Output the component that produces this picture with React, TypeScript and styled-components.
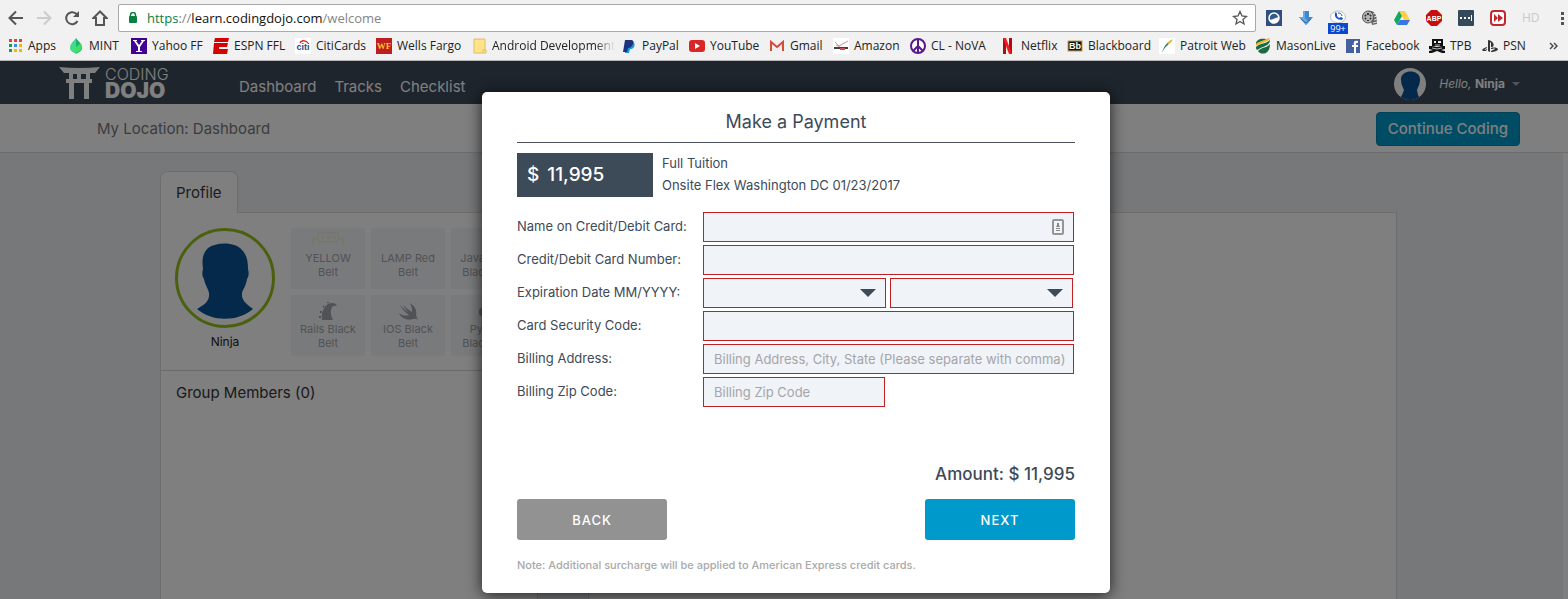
import React from "react";
import styled, { createGlobalStyle } from "styled-components";

const slate = "#3d4a58";
const blue = "#0099cb";
const pageFont = `Inter, "Liberation Sans", sans-serif`;
const chromeFont = `"Open Sans", "Noto Sans", sans-serif`;

const GlobalStyle = createGlobalStyle`
  *, *::before, *::after { box-sizing: border-box; }
  html, body, #root { height: 100%; }
  body { margin: 0; overflow: hidden; background: #fff; font-family: ${pageFont}; }
  button, input, select { font-family: inherit; margin: 0; }
  svg { display: block; flex: none; }
`;

const Shell = styled.div`
  display: flex;
  flex-direction: column;
  height: 100%;
`;

/* ---------- Browser frame ---------- */

const BrowserFrame = styled.div`
  flex: none;
  background: #f1f1f1;
  border-bottom: 1px solid #b6b4b6;
  font-family: ${chromeFont};
  padding: 4px 0 0;
`;

const Toolbar = styled.div`
  display: flex;
  align-items: center;
  height: 28px;
  padding: 0 0 0 8px;
`;

const NavButtons = styled.div`
  display: flex;
  gap: 12px;
  margin-right: 10px;
`;

const IconButton = styled.button<{ $width?: number }>`
  display: grid;
  place-items: center;
  width: ${(p) => p.$width ?? 16}px;
  height: 24px;
  padding: 0;
  border: 0;
  background: none;
  position: relative;
`;

const Omnibox = styled.div`
  flex: 1;
  min-width: 0;
  display: flex;
  align-items: center;
  height: 28px;
  padding: 0 7px 0 9px;
  border: 1px solid #a9a9a9;
  border-radius: 2px;
  background: #fff;
`;

const Address = styled.div`
  flex: 1;
  min-width: 0;
  margin-left: 9px;
  font-size: 13px;
  line-height: 20px;
  white-space: nowrap;
  overflow: hidden;
  color: #858585;
  outline: none;
`;

const Scheme = styled.span`
  color: #0b8043;
`;

const Host = styled.span`
  color: #111;
`;

const Extensions = styled.div`
  display: flex;
  gap: 16px;
  margin-left: 10px;
`;

const CountBadge = styled.span`
  position: absolute;
  left: -2px;
  top: 17px;
  width: 20px;
  height: 11px;
  background: #0a48cf;
  color: #fff;
  font-size: 9px;
  line-height: 11px;
  text-align: center;
`;

const HdLabel = styled.span`
  color: #c9c9c9;
  font-size: 12px;
  line-height: 16px;
`;

const BookmarkBar = styled.nav`
  display: flex;
  align-items: center;
  height: 28px;
  padding: 0 10px 0 7px;
`;

const Bookmark = styled.a<{ $width: number; $fade?: boolean }>`
  flex: 0 0 ${(p) => p.$width}px;
  display: flex;
  align-items: center;
  gap: 5px;
  font-size: 12px;
  line-height: 16px;
  color: #222;
  text-decoration: none;
  white-space: nowrap;

  span {
    ${(p) =>
      p.$fade &&
      `-webkit-mask-image: linear-gradient(90deg, #000 84%, transparent);
       mask-image: linear-gradient(90deg, #000 84%, transparent);`}
  }
`;

const MoreButton = styled.button`
  margin-left: auto;
  padding: 0;
  border: 0;
  background: none;
  color: #444;
`;

/* ---------- Site ---------- */

const Site = styled.div`
  flex: 1;
  min-height: 0;
  position: relative;
  overflow: hidden;
  display: flex;
  flex-direction: column;
`;

const SiteHeader = styled.header`
  flex: none;
  display: flex;
  align-items: center;
  height: 43px;
  padding: 0 48px 0 59px;
  background: ${slate};
  color: #fff;
`;

const Logo = styled.a`
  display: flex;
  align-items: center;
  gap: 5px;
  color: #fff;
  text-decoration: none;
`;

const LogoWords = styled.span`
  display: flex;
  flex-direction: column;
  width: 64px;
  font-size: 16px;
  line-height: 16px;
  font-weight: 300;

  b {
    font-size: 21px;
    line-height: 18px;
    font-weight: 900;
  }
`;

const SiteNav = styled.nav`
  display: flex;
  gap: 18px;
  margin-left: 70px;
  padding-top: 9px;

  a {
    color: #fff;
    font-size: 15px;
    line-height: 20px;
    text-decoration: none;
  }
`;

const UserMenu = styled.button`
  margin-left: auto;
  display: flex;
  align-items: center;
  padding: 2px 0 0;
  border: 0;
  background: none;
  color: #fff;
  font-size: 12px;
  line-height: 16px;
`;

const HeadThumb = styled.span`
  width: 32px;
  height: 32px;
  margin-right: 13px;
  border-radius: 50%;
  overflow: hidden;
  background: #fff;
`;

const Caret = styled.span`
  margin-left: 7px;
  border: 4px solid transparent;
  border-bottom: 0;
  border-top-color: #a3a9b0;
`;

const LocationBar = styled.div`
  flex: none;
  display: flex;
  align-items: center;
  justify-content: space-between;
  height: 49px;
  padding: 1px 48px 0 97px;
  background: #fff;
  border-bottom: 1px solid #dadbdd;
  font-size: 15px;
  line-height: 20px;
  color: #77797d;
`;

const ContinueButton = styled.button`
  height: 34px;
  padding: 0 11px;
  border: 1px solid #0084b0;
  border-radius: 4px;
  background: ${blue};
  color: #fff;
  font-size: 15px;
  line-height: 20px;
  font-weight: 500;
`;

const Body = styled.main`
  flex: 1;
  min-height: 0;
  isolation: isolate;
  padding: 18px 166px 0 160px;
  margin-right: 5px;
  background: #eff1f4;
`;

const ProfileTab = styled.button`
  display: block;
  position: relative;
  z-index: 1;
  height: 42px;
  padding: 0 15px;
  margin-bottom: -1px;
  border: 1px solid #dadbdd;
  border-bottom: 0;
  border-radius: 7px 7px 0 0;
  background: #fff;
  color: #3a3a3e;
  font-size: 15px;
`;

const Panels = styled.div`
  display: grid;
  grid-template-columns: 378px 1fr;
  column-gap: 50px;
  height: 100%;
`;

const Panel = styled.section`
  border: 1px solid #dadbdd;
  background: #fff;
  overflow: hidden;
`;

const ProfileTop = styled.div`
  display: flex;
  gap: 16px;
  height: 158px;
  padding: 15px 14px 0;
  border-bottom: 1px solid #d3d5d7;
`;

const ProfileCard = styled.div`
  flex: none;
  width: 100px;
  text-align: center;
  font-size: 12px;
  line-height: 18px;
  color: #222;
`;

const Portrait = styled.div`
  width: 100px;
  height: 100px;
  margin-bottom: 5px;
  border: 3px solid #95c11f;
  border-radius: 50%;
  overflow: hidden;
`;

const Belts = styled.div`
  display: grid;
  grid-template-columns: repeat(3, 74px);
  grid-auto-rows: 61px;
  gap: 6px;
`;

const Belt = styled.div`
  display: flex;
  flex-direction: column;
  align-items: center;
  gap: 1px;
  padding-top: 4px;
  background: #f3f5f9;
  color: #a3a5aa;
  font-size: 11px;
  line-height: 14px;
  text-align: center;
`;

const GroupTitle = styled.h2`
  margin: 0;
  padding: 12px 15px;
  font-size: 15px;
  line-height: 20px;
  font-weight: 400;
  color: #333;
`;

/* ---------- Payment dialog ---------- */

const Overlay = styled.div`
  position: absolute;
  inset: 0;
  display: flex;
  justify-content: center;
  align-items: flex-start;
  padding: 31px 0 0 24px;
  background: rgba(0, 0, 0, 0.5);
`;

const Dialog = styled.form`
  width: 628px;
  padding: 18px 35px 17px;
  border-radius: 5px;
  background: #fff;
  box-shadow: 0 2px 15px rgba(0, 0, 0, 0.75);
  color: ${slate};
  font-size: 13px;
  line-height: 22px;
`;

const DialogTitle = styled.h1`
  margin: 0 0 10px;
  padding-bottom: 8px;
  border-bottom: 1px solid #4b4f5e;
  font-size: 18px;
  line-height: 24px;
  font-weight: 400;
  text-align: center;
`;

const Tuition = styled.div`
  display: flex;
  gap: 9px;
  margin-bottom: 15px;
`;

const Price = styled.div`
  display: flex;
  gap: 8px;
  width: 136px;
  padding-left: 10px;
  background: ${slate};
  color: #fff;
  font-size: 19px;
  line-height: 44px;
  font-weight: 500;
`;

const TuitionLines = styled.div`
  display: flex;
  flex-direction: column;
  gap: 2px;
  line-height: 20px;
`;

const FieldRow = styled.div`
  display: flex;
  align-items: center;
  margin-bottom: 3px;
`;

const FieldLabel = styled.label`
  flex: 0 0 186px;
  padding-bottom: 2px;
`;

const FieldArea = styled.div`
  width: 371px;
  display: flex;
  gap: 4px;
  position: relative;
`;

const TextField = styled.input<{ $short?: boolean }>`
  width: ${(p) => (p.$short ? "182px" : "100%")};
  height: 30px;
  padding: 0 4px 0 10px;
  border: 1px solid #c01f24;
  border-radius: 0;
  background: #f0f3f8;
  color: ${slate};
  font-size: 13px;
  outline: none;

  &::placeholder { color: #a5a5a8; opacity: 1; }
`;

const SelectBox = styled.div`
  width: 183px;
  position: relative;
`;

const Select = styled.select`
  display: block;
  width: 100%;
  height: 30px;
  padding: 0 36px 0 10px;
  border: 1px solid #c01f24;
  border-radius: 0;
  background: #f0f3f8;
  color: ${slate};
  font-size: 13px;
  appearance: none;
`;

const SelectArrow = styled.span`
  position: absolute;
  right: 10px;
  top: 11px;
  border: 8px solid transparent;
  border-bottom: 0;
  border-top-color: ${slate};
  pointer-events: none;
`;

const AutofillMark = styled.span`
  position: absolute;
  right: 10px;
  top: 7px;
`;

const Amount = styled.p`
  margin: 55px 0 13px;
  font-size: 17px;
  line-height: 24px;
  font-weight: 500;
  text-align: right;
`;

const Actions = styled.div`
  display: flex;
  justify-content: space-between;
`;

const ActionButton = styled.button<{ $primary?: boolean }>`
  width: 150px;
  height: 41px;
  border: 0;
  border-radius: 3px;
  background: ${(p) => (p.$primary ? blue : "#929292")};
  color: #fff;
  font-size: 13px;
  font-weight: 500;
  letter-spacing: 1px;
`;

const Note = styled.p`
  margin: 14px 0 0;
  font-size: 11px;
  font-weight: 500;
  color: #a9a9a9;
`;

/* ---------- Icons ---------- */

const Icon = ({ children, width = 16 }: { children: React.ReactNode; width?: number }) => (
  <svg width={width} height={16} viewBox={`0 0 ${width} 16`} fill="none" aria-hidden="true">
    {children}
  </svg>
);

const glyphText = (text: string, fill: string, size: number, x: number, y: number, family = "Liberation Sans") => (
  <text x={x} y={y} fill={fill} fontSize={size} fontWeight="700" fontFamily={family} textAnchor="middle">
    {text}
  </text>
);

const AppsIcon = (
  <Icon>
    {["#db4437", "#db4437", "#db4437", "#0f9d58", "#4285f4", "#f4b400", "#0f9d58", "#f4b400", "#f4b400"].map((c, i) => (
      <rect key={i} x={2 + (i % 3) * 5} y={1 + Math.floor(i / 3) * 5} width="3" height="3" fill={c} />
    ))}
  </Icon>
);

const bookmarks: { label: string; width: number; fade?: boolean; icon: React.ReactNode }[] = [
  { label: "Apps", width: 61, icon: AppsIcon },
  {
    label: "MINT", width: 63,
    icon: (
      <Icon>
        <path d="M8 0C5 4 2 6 2 10c0 3 3 4 6 6Z" fill="#45d98e" />
        <path d="M8 0c3 4 6 6 6 10 0 3-3 4-6 6Z" fill="#16b378" />
        <path d="M8 15V9l5-4c2 5 0 8-5 10Z" fill="#3fe05b" />
      </Icon>
    ),
  },
  {
    label: "Yahoo FF", width: 82,
    icon: (
      <Icon>
        <rect width="16" height="16" fill="#410093" />
        <path d="M2 2h4v1H5l3 4 3-4h-1V2h4v1h-1L9 9v4h2v1H5v-1h2V9L3 3H2Z" fill="#fff" />
      </Icon>
    ),
  },
  {
    label: "ESPN FFL", width: 82,
    icon: (
      <Icon>
        <path d="M2 0h14l-1 4H1ZM1 5h14l-1 4H6v2h9l-1 5H0Z" fill="#d50000" />
      </Icon>
    ),
  },
  {
    label: "CitiCards", width: 81,
    icon: (
      <Icon>
        <rect width="16" height="16" fill="#fff" />
        <path d="M5 5c1-3 6-3 8 0" stroke="#e8272c" strokeWidth="1.3" />
        {glyphText("citi", "#1b4a8b", 9, 8, 12)}
      </Icon>
    ),
  },
  {
    label: "Wells Fargo", width: 95,
    icon: (
      <Icon>
        <rect width="16" height="16" fill="#bd1e22" />
        {glyphText("WF", "#ffc72c", 9, 8, 11, "Liberation Serif")}
      </Icon>
    ),
  },
  {
    label: "Android Development", width: 150, fade: true,
    icon: (
      <Icon>
        <path d="M3 1h11v11h1v3H3Z" fill="#ffe38b" stroke="#e0be62" />
        <path d="M12 15v-3h2" stroke="#e0be62" />
      </Icon>
    ),
  },
  {
    label: "PayPal", width: 68,
    icon: (
      <Icon>
        <path d="M5 4h6c3 0 3 3 2 5s-3 2-4 2l-1 4H4Z" fill="#1799d6" />
        <path d="M4 2h5c4 0 4 2 3 4s-2 4-5 4l-1 4H2Z" fill="#1b3380" />
      </Icon>
    ),
  },
  {
    label: "YouTube", width: 80,
    icon: (
      <Icon>
        <rect y="2" width="16" height="12" rx="3" fill="#d92626" />
        <path d="m6 5 5 3-5 3Z" fill="#fff" />
      </Icon>
    ),
  },
  {
    label: "Gmail", width: 64,
    icon: (
      <Icon>
        <path d="M2 3h12v10H2Z" fill="#efefef" />
        <path d="M2 13V4l6 5 6-5v9" stroke="#d54b3d" strokeWidth="2" />
      </Icon>
    ),
  },
  {
    label: "Amazon", width: 77,
    icon: (
      <Icon>
        <rect width="16" height="16" fill="#fff" />
        <path d="m2 4 4 4 9-5M3 7l4 2" stroke="#e38d8d" />
        <path d="M1 10h14" stroke="#414141" strokeWidth="2" />
        <path d="M7 11h5" stroke="#c8504f" strokeWidth="2" />
      </Icon>
    ),
  },
  {
    label: "CL - NoVA", width: 90,
    icon: (
      <Icon>
        <circle cx="8" cy="8" r="7" stroke="#551a8b" strokeWidth="2" fill="#fff" />
        <path d="M8 1v14M8 8l-5 5M8 8l5 5" stroke="#551a8b" strokeWidth="2" />
      </Icon>
    ),
  },
  {
    label: "Netflix", width: 67,
    icon: (
      <Icon>
        <path d="M3 0h3v16H3ZM9 0h3v16H9Z" fill="#b20b13" />
        <path d="M3 0h3l6 16H9Z" fill="#ed1c24" />
      </Icon>
    ),
  },
  {
    label: "Blackboard", width: 92,
    icon: (
      <Icon>
        <rect x="1" y="3" width="14" height="10" fill="#151515" stroke="#c4a052" />
        {glyphText("Bb", "#fff", 9, 8, 11)}
      </Icon>
    ),
  },
  {
    label: "Patroit Web", width: 96,
    icon: (
      <Icon>
        <rect width="16" height="16" fill="#fff" />
        <path d="M3 15C5 8 8 4 13 2 11 6 6 8 3 15Z" fill="#278048" />
        <path d="M8 5c2-2 4-3 6-4-1 3-3 4-5 5Z" fill="#efb82b" />
      </Icon>
    ),
  },
  {
    label: "MasonLive", width: 90,
    icon: (
      <Icon>
        <path d="M2 4C5 1 10 2 15 0c-1 4-8 4-14 8 0-2 0-3 1-4Z" fill="#f1b52b" />
        <path d="M2 3c3-3 6-2 9-2-3 2-7 2-10 5 0-1 0-2 1-3ZM1 9C5 5 11 6 15 2c0 6-7 6-13 10-1-1-1-2-1-3Zm2 4c4-4 9-3 12-7 0 4-1 7-4 9-3 1-6 1-8-2Z" fill="#176b3e" />
      </Icon>
    ),
  },
  {
    label: "Facebook", width: 84,
    icon: (
      <Icon>
        <rect x="1" y="1" width="14" height="14" fill="#4460a0" />
        <path d="M9 15V9H7V7h2c-1-4 1-5 4-4v2c-2 0-2 0-2 2h2v2h-2v6Z" fill="#fff" />
      </Icon>
    ),
  },
  {
    label: "TPB", width: 53,
    icon: (
      <Icon>
        <path d="M3 1h11v7H3ZM0 8h3l5 1 5-1h3v3l-4 1 4 1v2h-3l-5-2-5 2H0v-2l4-1-4-1Z" fill="#111" />
        <path d="M5 3h2v2H5Zm4 0h3v2H9Z" fill="#eee" />
        <path d="M6 7h5M3 10l5 1 5-1" stroke="#ddd" strokeWidth=".8" />
      </Icon>
    ),
  },
  {
    label: "PSN", width: 50,
    icon: (
      <Icon>
        <path d="M6 2c7 1 7 8 3 7V5L8 4v10l-2-1Z" fill="#333" />
        <path d="M5 9c-4 1-6 3-4 4 2 0 3 0 4-1v-1l-2 1c-1 0 0-1 2-2Zm4 1c3-1 7 0 7 1 0 2-4 3-7 3v-1l4-2c0-1-2 0-4 0Z" fill="#333" />
      </Icon>
    ),
  },
];

const extensions: { name: string; icon: React.ReactNode; badge?: string }[] = [
  {
    name: "Screenshot",
    icon: (
      <Icon>
        <rect width="16" height="16" fill="#2f4f7f" />
        <circle cx="8" cy="8" r="5" fill="#355a8d" stroke="#fff" strokeWidth="1.5" />
        <path d="M3 9c3 2 5-1 10-2 0 8-9 8-10 2Z" fill="#fff" />
      </Icon>
    ),
  },
  {
    name: "Download",
    icon: (
      <Icon>
        <path d="M5 1h6v6h4l-7 8-7-8h4Z" fill="#3f87cf" />
        <path d="M5 1h2v7l4 4-3 3-7-8h4Z" fill="#6aa8df" />
        <path d="m3 9 5 4 5-4" stroke="#2964a8" />
      </Icon>
    ),
  },
  {
    name: "Voice",
    badge: "99+",
    icon: (
      <Icon>
        <ellipse cx="8" cy="7" rx="7.5" ry="6" fill="#fff" stroke="#b9bdc4" />
        <path d="M5 3c-1 4 2 7 7 7l1-2-2-1-2 1-2-2V4L6 2Z" fill="#1a55c4" />
        <path d="M8 3c2 0 4 1 4 3" stroke="#1a55c4" />
      </Icon>
    ),
  },
  {
    name: "Film",
    icon: (
      <Icon>
        <path d="M6 1c6-1 9 3 9 13l-5 1Z" fill="#666" />
        <ellipse cx="6" cy="7" rx="5.500" ry="6" fill="#b4b4b4" stroke="#555" />
        <path d="M6 3v2M3 5l1 1M9 5 8 6M3 9l1-1M9 9 8 8M6 10v1" stroke="#333" strokeWidth="2" />
        <path d="M11 4l2-1M12 7l3-1M12 10l3-1M11 13l4-1" stroke="#ddd" />
      </Icon>
    ),
  },
  {
    name: "Drive",
    icon: (
      <Icon>
        <path d="M5 1h6l5 9h-6Z" fill="#ffcf48" />
        <path d="m5 1 3 5-5 9-3-5Z" fill="#11a861" />
        <path d="M6 10h10l-3 5H3Z" fill="#3777e3" />
      </Icon>
    ),
  },
  {
    name: "Adblock",
    icon: (
      <Icon>
        <path d="M5 0h6l5 5v6l-5 5H5l-5-5V5Z" fill="#c70d0d" />
        {glyphText("ABP", "#fff", 7, 8, 11)}
      </Icon>
    ),
  },
  {
    name: "Passwords",
    icon: (
      <Icon>
        <rect width="16" height="16" rx="1" fill="#34495a" />
        <path d="M2 7h2v2H2Zm4 0h2v2H6Zm4 0h2v2h-2Zm3-2h1v6h-1Z" fill="#fff" />
      </Icon>
    ),
  },
  {
    name: "Skip",
    icon: (
      <Icon>
        <rect x="1" y="1" width="14" height="14" rx="3" fill="#fff" stroke="#c1272d" strokeWidth="2" />
        <path d="m4 4 4 4-4 4Zm4 0 5 4-5 4Z" fill="#c1272d" />
      </Icon>
    ),
  },
];

const HEAD =
  "M30 17C38 11 55 11 62 17C69 23 70 30 70 38C71 42 71 45 69 48C68 55 65 58 64 62C63 70 70 74 75 78C60 91 34 91 19 78C25 74 32 71 31 62C30 57 27 54 26 48C24 45 24 42 25 38C24 30 24 23 30 17Z";

const Gate = () => (
  <svg width="41" height="34" viewBox="0 0 41 34" fill="currentColor" aria-hidden="true">
    <path fillRule="evenodd" d="M0 1q20 2 41 0l-5 6h-5v6h2v4h-3v16h-5V17H15v16h-5V17H7v-4h3V7H5ZM14 8v5h4V8Zm8 0v5h5V8Z" />
  </svg>
);

const belts: { name: React.ReactNode; icon: React.ReactNode }[] = [
  {
    name: <>YELLOW<br />Belt</>,
    icon: <svg width="34" height="18" viewBox="0 0 34 18"><path d="M2 13V7h5V1h20v6h5v6M7 10h20" stroke="#efeedc" strokeWidth="2" fill="none" /><path d="M10 4h3v3h-3Zm6 0h3v3h-3Zm6 0h3v3h-3Z" fill="#efeedc" /></svg>,
  },
  {
    name: <>LAMP Red<br />Belt</>,
    icon: <svg width="34" height="18" viewBox="0 0 34 18"><path d="M1 10h8M12 9h12M30 1v9M27 5h6" stroke="#f6f3f5" strokeWidth="2" fill="none" /></svg>,
  },
  {
    name: <>JavaScript<br />Black Belt</>,
    icon: <svg width="34" height="18" viewBox="0 0 34 18" />,
  },
  {
    name: <>Rails Black<br />Belt</>,
    icon: <svg width="22" height="22" viewBox="0 0 22 22"><path d="M5 21C4 12 8 4 15 4c3 0 4 1 5 3-6-2-8 5-4 14Z" fill="#a3a5aa" /><path d="M2 18h2M3 13h2M6 7l1 1M11 3v1" stroke="#a3a5aa" strokeWidth="2" /></svg>,
  },
  {
    name: <>IOS Black<br />Belt</>,
    icon: <svg width="22" height="22" viewBox="0 0 22 22"><path d="M13 4c6 4 7 8 6 12l2 5c-2-2-3-1-5-1-6 2-12-1-14-6 4 3 7 3 10 2C8 13 5 10 3 6c3 3 5 5 8 7C9 10 7 8 6 6c3 3 6 5 9 7 0-3 0-5-2-9Z" fill="#a3a5aa" /></svg>,
  },
  {
    name: <>Python<br />Black Belt</>,
    icon: <svg width="22" height="22" viewBox="0 0 22 22"><path d="M8 4h6q3 0 3 3v4H8v6H5q-3 0-3-4t3-4h6V7H7q0-3 1-3Z" fill="#a3a5aa" /></svg>,
  },
];

export default function App() {
  return (
    <Shell>
      <GlobalStyle />
      <BrowserFrame>
        <Toolbar>
          <NavButtons>
            <IconButton aria-label="Back">
              <Icon><path d="M15 8H2M8 1.500 1.500 8 8 14.500" stroke="#555" strokeWidth="2" /></Icon>
            </IconButton>
            <IconButton aria-label="Forward">
              <Icon><path d="M1 8h13M8 1.500 14.500 8 8 14.500" stroke="#ccc" strokeWidth="2" /></Icon>
            </IconButton>
            <IconButton aria-label="Reload">
              <Icon><path d="M13.500 11A6 6 0 1 1 12 3.500L14 6" stroke="#555" strokeWidth="2" /><path d="M15 1v6H9Z" fill="#555" /></Icon>
            </IconButton>
            <IconButton aria-label="Home">
              <Icon><path d="M8 1.500 1.500 8H4v7h8V8h2.500Z" stroke="#555" strokeWidth="2" /></Icon>
            </IconButton>
          </NavButtons>
          <Omnibox>
            <svg width="10" height="12" viewBox="0 0 10 12" aria-hidden="true">
              <path d="M2.500 5V3a2.500 2.500 0 0 1 5 0v2" stroke="#0b8043" strokeWidth="1.500" fill="none" />
              <rect x="1" y="4" width="8" height="7" rx="1" fill="#0b8043" />
            </svg>
            <Address role="textbox" aria-label="Address" contentEditable suppressContentEditableWarning spellCheck={false}>
              <Scheme>https</Scheme>://<Host>learn.codingdojo.com</Host>/welcome
            </Address>
            <IconButton aria-label="Bookmark this page">
              <Icon><path d="m8 1.500 2 4.500 4.500.500L11 9.500l1 4.500-4-2.500L4 14l1-4.500-3.500-3L6 6Z" stroke="#555" strokeWidth="1.300" /></Icon>
            </IconButton>
          </Omnibox>
          <Extensions>
            {extensions.map((e) => (
              <IconButton key={e.name} aria-label={e.name}>
                {e.icon}
                {e.badge && <CountBadge>{e.badge}</CountBadge>}
              </IconButton>
            ))}
            <IconButton><HdLabel>HD</HdLabel></IconButton>
            <IconButton aria-label="Menu" $width={14}>
              <Icon width={14}><path d="M7 2h3v3H7Zm0 5h3v3H7Zm0 5h3v3H7Z" fill="#555" /></Icon>
            </IconButton>
          </Extensions>
        </Toolbar>
        <BookmarkBar>
          {bookmarks.map((b) => (
            <Bookmark key={b.label} href="#" $width={b.width} $fade={b.fade}>
              {b.icon}
              <span>{b.label}</span>
            </Bookmark>
          ))}
          <MoreButton aria-label="More bookmarks">
            <svg width="9" height="8" viewBox="0 0 9 8"><path d="m1 1 3 3-3 3M5 1l3 3-3 3" stroke="currentColor" strokeWidth="1.400" fill="none" /></svg>
          </MoreButton>
        </BookmarkBar>
      </BrowserFrame>

      <Site>
        <SiteHeader>
          <Logo href="#">
            <Gate />
            <LogoWords>CODING<b>DOJO</b></LogoWords>
          </Logo>
          <SiteNav>
            <a href="#">Dashboard</a>
            <a href="#">Tracks</a>
            <a href="#">Checklist</a>
          </SiteNav>
          <UserMenu>
            <HeadThumb>
              <svg width="32" height="32" viewBox="0 0 32 32"><path d="M7 11C7 1 26 1 26 11c0 6-2 8-3 11l1 5 3 5H5l3-5 2-5c-1-3-3-5-3-11Z" fill="#085394" /></svg>
            </HeadThumb>
            <i>Hello,</i>&nbsp;<b>Ninja</b>
            <Caret />
          </UserMenu>
        </SiteHeader>
        <LocationBar>
          <span>My Location: Dashboard</span>
          <ContinueButton>Continue Coding</ContinueButton>
        </LocationBar>
        <Body>
          <ProfileTab>Profile</ProfileTab>
          <Panels>
            <Panel>
              <ProfileTop>
                <ProfileCard>
                  <Portrait>
                    <svg width="94" height="94" viewBox="0 0 94 94"><path d={HEAD} fill="#085394" /></svg>
                  </Portrait>
                  Ninja
                </ProfileCard>
                <Belts>
                  {belts.map((b, i) => (
                    <Belt key={i}>{b.icon}<span>{b.name}</span></Belt>
                  ))}
                </Belts>
              </ProfileTop>
              <GroupTitle>Group Members (0)</GroupTitle>
            </Panel>
            <Panel />
          </Panels>
        </Body>

        <Overlay>
          <Dialog role="dialog" aria-labelledby="pay-title" onSubmit={(e) => e.preventDefault()}>
            <DialogTitle id="pay-title">Make a Payment</DialogTitle>
            <Tuition>
              <Price><span>$</span><span>11,995</span></Price>
              <TuitionLines>
                <div>Full Tuition</div>
                <div>Onsite Flex Washington DC 01/23/2017</div>
              </TuitionLines>
            </Tuition>
            <FieldRow>
              <FieldLabel htmlFor="name">Name on Credit/Debit Card:</FieldLabel>
              <FieldArea>
                <TextField id="name" />
                <AutofillMark>
                  <svg width="12" height="16" viewBox="0 0 12 16"><rect x="1" y="1" width="10" height="14" rx="1" fill="#f4f4f4" stroke="#929699" strokeWidth="2" /><path d="M5 4h2v2l1 2H4l1-2ZM4 9h4v1H4Zm0 2h4v1H4Z" fill="#85898c" /></svg>
                </AutofillMark>
              </FieldArea>
            </FieldRow>
            <FieldRow>
              <FieldLabel htmlFor="number">Credit/Debit Card Number:</FieldLabel>
              <FieldArea><TextField id="number" /></FieldArea>
            </FieldRow>
            <FieldRow>
              <FieldLabel htmlFor="month">Expiration Date MM/YYYY:</FieldLabel>
              <FieldArea>
                <SelectBox><Select id="month"><option></option></Select><SelectArrow /></SelectBox>
                <SelectBox><Select aria-label="Expiration year"><option></option></Select><SelectArrow /></SelectBox>
              </FieldArea>
            </FieldRow>
            <FieldRow>
              <FieldLabel htmlFor="code">Card Security Code:</FieldLabel>
              <FieldArea><TextField id="code" /></FieldArea>
            </FieldRow>
            <FieldRow>
              <FieldLabel htmlFor="address">Billing Address:</FieldLabel>
              <FieldArea><TextField id="address" placeholder="Billing Address, City, State (Please separate with comma)" /></FieldArea>
            </FieldRow>
            <FieldRow>
              <FieldLabel htmlFor="zip">Billing Zip Code:</FieldLabel>
              <FieldArea><TextField id="zip" $short placeholder="Billing Zip Code" /></FieldArea>
            </FieldRow>
            <Amount>Amount: $ 11,995</Amount>
            <Actions>
              <ActionButton type="button">BACK</ActionButton>
              <ActionButton type="submit" $primary>NEXT</ActionButton>
            </Actions>
            <Note>Note: Additional surcharge will be applied to American Express credit cards.</Note>
          </Dialog>
        </Overlay>
      </Site>
    </Shell>
  );
}
